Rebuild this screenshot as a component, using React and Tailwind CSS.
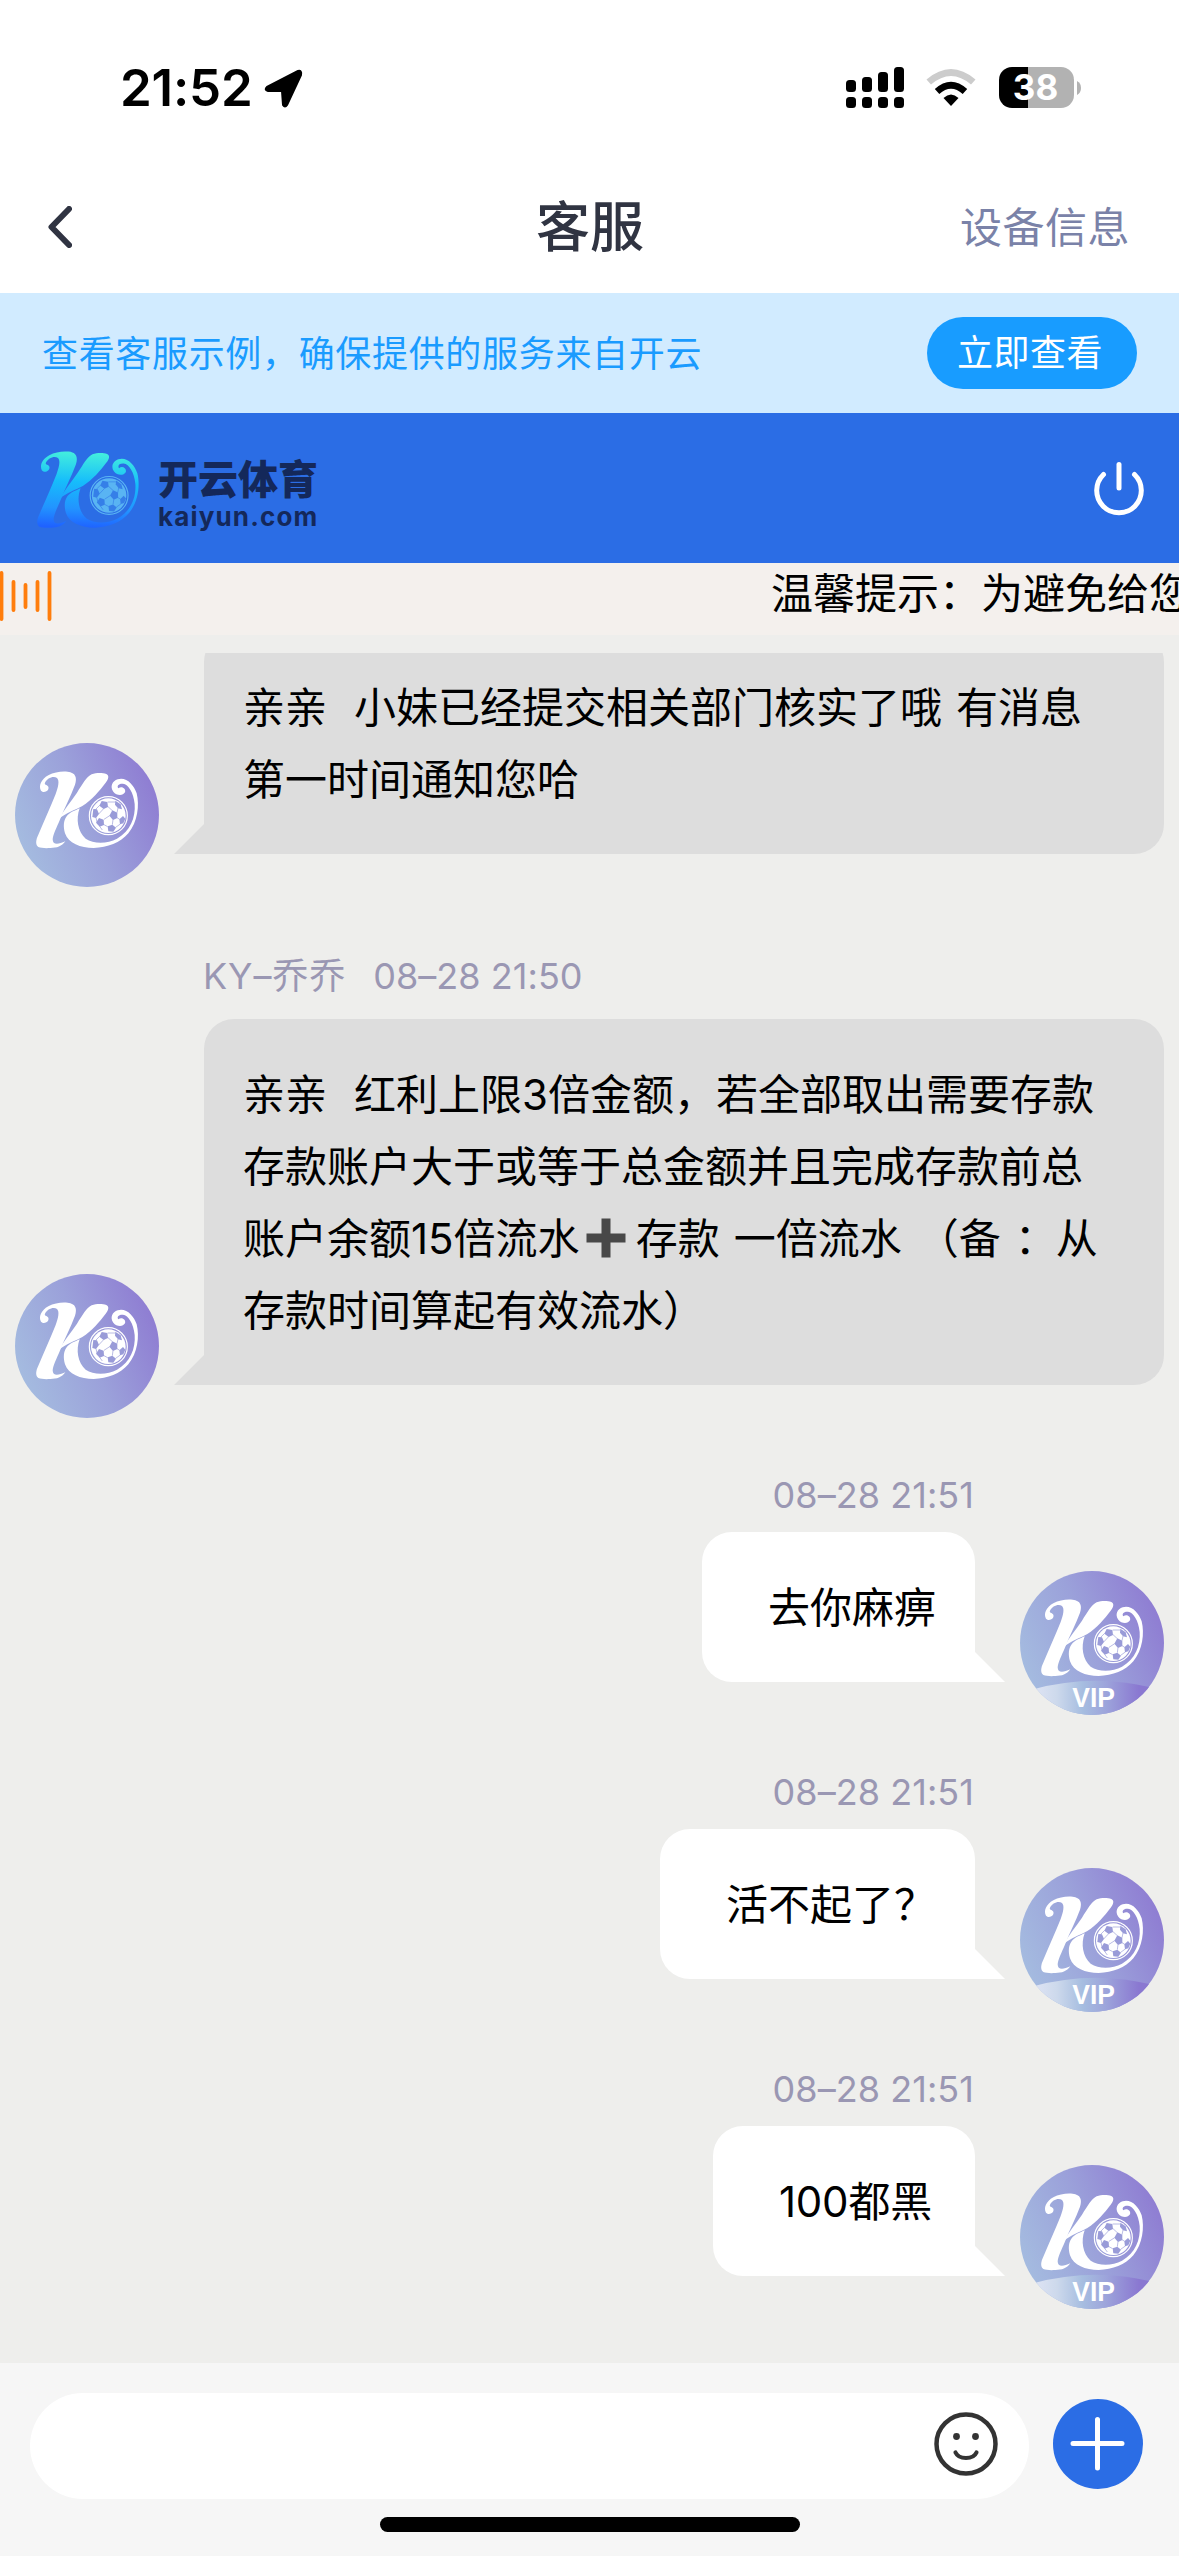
import React from "react";

const BALL_PATCHES = [
  "M320 237 L337 240 L339 255 L326 261 L313 251 Z",
  "M361 236 L377 247 L381 262 L369 259 L360 248 Z",
  "M295 261 L306 262 L312 276 L303 288 L292 285 Z",
  "M312 288 L326 293 L327 309 L314 314 L303 302 Z",
  "M352 265 L367 272 L367 288 L354 294 L343 281 Z",
  "M384 282 L391 290 L385 304 L375 307 L373 292 Z",
  "M338 313 L352 308 L363 317 L355 329 L340 328 Z",
];

function Mark({ fill, ballFill, patch }) {
  return (
    <g>
      <g fill={fill}>
        <path d="M138 206 C130 192 138 172 160 160 C178 150 200 147 218 149 C242 152 247 166 240 188 C228 222 208 258 196 290 C184 318 174 338 173 352 C173 370 190 368 211 358 C200 373 186 378 166 378 C150 379 138 378 130 375 C121 368 122 354 130 338 C148 296 166 256 182 216 C190 194 194 176 186 168 C176 160 156 168 150 182 C147 190 156 186 160 194 C164 206 147 215 138 206 Z" />
        <path d="M192 290 C208 262 228 238 246 212 C262 188 274 164 290 157 C304 152 322 152 334 156 C344 161 340 172 332 182 C314 206 290 234 262 252 C240 264 212 274 192 290 Z" />
        <path d="M254 259 C242 290 248 330 272 350 C296 366 336 366 366 350 C406 328 422 286 419 246 C416 212 400 187 384 185 C370 184 365 192 370 199 C380 190 394 200 390 211 C384 222 364 221 355 209 C344 194 352 177 368 172 C394 164 416 188 425 214 C434 250 428 300 400 334 C376 362 338 377 296 378 C256 378 220 364 210 334 C204 312 206 296 214 284 C224 270 240 266 254 259 Z" />
      </g>
      <circle cx="340" cy="281" r="57" fill="none" stroke={ballFill} strokeWidth="3.5" />
      <circle cx="340" cy="281" r="52" fill={ballFill} />
      <g fill={patch}>
        {BALL_PATCHES.map((d) => (
          <path key={d} d={d} />
        ))}
      </g>
      <path
        d="M339 254 L352 266 M338 240 L361 240 M326 260 L311 276 M327 292 L344 281 M327 308 L338 314 M354 293 L352 308 M366 287 L374 292 M366 272 L369 258 M303 287 L306 300 M314 250 L302 262 M314 313 L322 324 M362 316 L376 306"
        fill="none"
        stroke={patch}
        strokeWidth="2"
      />
    </g>
  );
}

function Avatar({ vip }) {
  return (
    <svg viewBox="60 63 432 432" className="-mb-[33px] size-36 shrink-0 self-end">
      <defs>
        <linearGradient id="av" x1="0" y1="0.72" x2="1" y2="0.3">
          <stop offset="0" stopColor="#a5bde0" />
          <stop offset="0.5" stopColor="#9ba1da" />
          <stop offset="1" stopColor="#8e7bd2" />
        </linearGradient>
        <linearGradient id="band" x1="0" y1="0" x2="1" y2="0">
          <stop offset="0" stopColor="#dfe4f4" />
          <stop offset="0.2" stopColor="#cdd9ec" />
          <stop offset="0.42" stopColor="#a6bde0" />
          <stop offset="0.62" stopColor="#9da4db" />
          <stop offset="0.9" stopColor="#8a78d1" />
        </linearGradient>
        <clipPath id="disc">
          <circle cx="276" cy="279" r="216" />
        </clipPath>
      </defs>
      <circle cx="276" cy="279" r="216" fill="url(#av)" />
      {vip && (
        <path d="M100 418 Q276 370 452 412 V500 H100 Z" fill="url(#band)" clipPath="url(#disc)" />
      )}
      <Mark fill="#fff" ballFill="#fff" patch="#999bd8" />
      {vip && (
        <text x="281" y="470" textAnchor="middle" fontSize="81" fontWeight="700" fill="#fff" textLength="128" lengthAdjust="spacingAndGlyphs" fontFamily="Liberation Sans, Arial, sans-serif">
          VIP
        </text>
      )}
    </svg>
  );
}

function StatusBar() {
  return (
    <div className="flex h-[172px] items-start justify-between pr-[98px] pl-[120px] text-black">
      <div className="flex pt-[58px]">
        <span className="w-[144px] text-[51px] leading-[60px] font-semibold tracking-[-0.2px]">21:52</span>
        <svg viewBox="0 0 39 40" className="mt-[11px] h-10 w-[39px]">
          <path d="M3 18 L34 2 Q38 1 37 6 L23 36 Q21 39 19 36 L18 22 L4 22 Q0 21 3 18Z" fill="#000" stroke="#000" strokeWidth="2" strokeLinejoin="round" />
        </svg>
      </div>
      <div className="flex pt-[67px]">
        <svg viewBox="0 0 58 41" className="h-[41px] w-[58px]">
          {[[0, 13], [16, 10], [32, 5], [48, 0]].map(([x, y]) => (
            <g key={x}>
              <rect x={x} y={y} width="10" height={25 - y} rx="3.5" />
              <rect x={x} y="30" width="10" height="11" rx="3.5" />
            </g>
          ))}
        </svg>
        <svg viewBox="0 0 50 38" className="mt-[2px] ml-[22px] h-[38px] w-[50px]">
          <path d="M0.5 10.5 Q25 -10.5 49.5 10.5 L45 15.5 Q25 -1.5 5 15.5 Z" fill="#ccc" />
          <path d="M8.8 20 Q25 5.5 41.2 20 L36.7 25 Q25 14.5 13.3 25 Z" />
          <path d="M17.5 29 Q25 22 32.5 29 L25 37 Z" />
        </svg>
        <div className="relative ml-[23px] flex h-[41px] w-[75px] items-center justify-center overflow-hidden rounded-[13px] bg-[linear-gradient(90deg,#000_29px,#b2b2b2_29px)] pr-[2px] text-[35px] font-bold text-white">
          38
        </div>
        <svg viewBox="0 0 4 14" className="mt-[14px] ml-[3px] h-[14px] w-1">
          <path d="M0 0 Q4 2 4 7 T0 14 Z" fill="#b2b2b2" />
        </svg>
      </div>
    </div>
  );
}

function LeftMessage({ children, clipped }) {
  return (
    <div className="flex pl-[15px]">
      <Avatar />
      <svg viewBox="0 0 30 30" className="ml-[15px] size-[30px] self-end">
        <path d="M0 30 L30 0 V30 Z" fill="#ddd" />
      </svg>
      <div className={(clipped ? "-mt-[21px] " : "") + "w-[960px] rounded-[30px] rounded-bl-none bg-[#ddd] px-[39px] pt-10 pb-[38px] text-[42px] leading-[72px] whitespace-pre text-black"}>
        {children}
      </div>
    </div>
  );
}

function RightMessage({ time, children }) {
  return (
    <div className="pt-[88px]">
      <div className="mr-[205px] mb-[15px] text-right text-[36px] leading-[44px] tracking-[0.05px] text-[#9a97b3]">{time}</div>
      <div className="flex justify-end pr-[15px]">
        <div className="rounded-[30px] rounded-br-none bg-white pt-10 pr-[39px] pb-[38px] pl-[66px] text-[42px] leading-[72px] whitespace-pre text-black">
          {children}
        </div>
        <svg viewBox="0 0 30 30" className="mr-[15px] size-[30px] self-end">
          <path d="M0 0 L30 30 H0 Z" fill="#fff" />
        </svg>
        <Avatar vip />
      </div>
    </div>
  );
}

export default function App() {
  return (
    <div lang="zh-CN" className="flex h-[2556px] w-[1179px] flex-col overflow-hidden bg-white font-['Inter','Noto_Sans_CJK_SC',sans-serif]">
      <StatusBar />

      <nav className="grid h-[121px] grid-cols-3 items-center pb-[12px]">
        <svg viewBox="0 0 24 42" className="ml-12 h-[42px] w-6">
          <path d="M21 3 L3.5 21 L21 39" fill="none" stroke="#303442" strokeWidth="6" strokeLinecap="round" strokeLinejoin="round" />
        </svg>
        <h1 className="pt-[2px] pl-px text-center text-[54px] leading-none font-medium text-[#303442]">客服</h1>
        <span className="pt-[2px] pr-[49px] text-right text-[42px] leading-none tracking-[0.5px] text-[#7a82a8]">设备信息</span>
      </nav>

      <div className="flex h-[120px] items-center justify-between bg-[#d1ebff] pr-[42px] pl-[42px]">
        <span className="pt-[2px] text-[36px] tracking-[0.67px] text-[#1a9bff]">查看客服示例，确保提供的服务来自开云</span>
        <button className="flex h-[72px] w-[210px] items-center justify-center rounded-full bg-[#189cff] pr-[4px] text-[36px] tracking-[0.5px] text-white">立即查看</button>
      </div>

      <header className="flex h-[150px] items-start justify-between bg-[#2b6de5] pl-[37px]">
        <div className="flex pt-[38px]">
          <svg viewBox="123 148 307 230" className="h-[77px] w-[102px]">
            <defs>
              <linearGradient id="brand" gradientUnits="userSpaceOnUse" x1="260" y1="148" x2="250" y2="378">
                <stop offset="0" stopColor="#45f0dc" />
                <stop offset="0.4" stopColor="#16bdfb" />
                <stop offset="0.75" stopColor="#2294ff" />
                <stop offset="1" stopColor="#1f62ff" />
              </linearGradient>
            </defs>
            <Mark fill="url(#brand)" ballFill="#59b4f3" patch="#357fe8" />
          </svg>
          <div className="ml-[19px] flex flex-col pt-[7px] text-[#14285a]">
            <span className="text-[40px] leading-[44px] font-black">开云体育</span>
            <span className="mt-px text-[26px] leading-[28px] font-bold tracking-[1.15px]">kaiyun.com</span>
          </div>
        </div>
        <svg viewBox="0 0 54 58" className="mt-[47px] mr-[33px] h-[58px] w-[54px]" fill="none" stroke="#fff" strokeWidth="5" strokeLinecap="round">
          <path d="M27 4.5 V28" />
          <path d="M11.5 14.5 A22.3 22.3 0 1 0 42.5 14.5" />
        </svg>
      </header>

      <div className="flex h-[72px] items-start overflow-hidden bg-[#f4f0ed]">
        <svg viewBox="0 0 52 50" className="mt-2 h-[50px] w-[52px] shrink-0" stroke="#ff7d0c" strokeWidth="3.8" strokeLinecap="round">
          <path d="M1.5 2 V48 M13.5 11 V39 M25.5 14 V36 M37.5 11 V39 M49.5 2 V48" />
        </svg>
        <span className="ml-[719px] pt-px text-[42px] leading-[60px] whitespace-nowrap text-black">温馨提示：为避免给您</span>
      </div>

      <main className="h-[1728px] bg-[#eeeeec] pt-[18px]">
        <section className="h-[1710px] overflow-hidden">
          <LeftMessage clipped>
            <p>亲亲<span className="inline-block w-[27px]"> </span>小妹已经提交相关部门核实了哦<span className="inline-block w-[14px]"> </span>有消息</p>
            <p>第一时间通知您哈</p>
          </LeftMessage>
          <div className="mt-[100px] mb-[21px] ml-[203px] text-[36px] leading-[44px] whitespace-pre text-[#9a97b3]">
            <span className="tracking-[0.9px]">KY–乔乔</span>
            <span className="inline-block w-[27px]"> </span>
            <span className="tracking-[0.05px]">08–28 21:50</span>
          </div>
          <LeftMessage>
            <p>亲亲<span className="inline-block w-[27px]"> </span>红利上限3倍金额，若全部取出需要存款</p>
            <p>存款账户大于或等于总金额并且完成存款前总</p>
            <p>
              账户余额15倍流水
              <svg viewBox="0 0 40 40" aria-label="➕" className="mr-[10px] ml-[6px] inline-block size-10 align-[-4px]">
                <path d="M15.5 0.5 H24.5 V15.5 H39.5 V24.5 H24.5 V39.5 H15.5 V24.5 H0.5 V15.5 H15.5 Z" fill="#484848" />
              </svg>
              存款<span className="inline-block w-[14px]"> </span>一倍流水<span className="inline-block w-[57px] text-right">（</span>备<span className="inline-block w-[55px] pl-[14px] text-center">：</span>从
            </p>
            <p>存款时间算起有效流水）</p>
          </LeftMessage>
          <RightMessage time="08–28 21:51">去你麻痹</RightMessage>
          <RightMessage time="08–28 21:51">活不起了？</RightMessage>
          <RightMessage time="08–28 21:51">
            <span className="pr-1 tracking-[-0.2px]">100都黑</span>
          </RightMessage>
        </section>
      </main>

      <footer className="flex h-[193px] flex-col items-center bg-[#f6f6f6] pt-[30px]">
        <div className="flex h-[106px] w-full items-start pl-[30px]">
          <div className="flex h-[106px] w-[999px] justify-end rounded-full bg-white pt-[19px] pr-[31px]">
            <svg viewBox="0 0 64 64" className="size-16">
              <circle cx="32" cy="32" r="29.5" fill="none" stroke="#333" strokeWidth="4.5" />
              <circle cx="22.5" cy="24.5" r="3.4" fill="#333" />
              <circle cx="41.5" cy="24.5" r="3.4" fill="#333" />
              <path d="M21.5 40.5 Q24 46 32 46 T42.5 40.5" fill="none" stroke="#333" strokeWidth="4.2" strokeLinecap="round" />
            </svg>
          </div>
          <svg viewBox="0 0 90 90" className="mt-[6px] ml-6 size-[90px]">
            <circle cx="45" cy="45" r="45" fill="#2b6de5" />
            <path d="M44.5 20.5 V69 M20 44.5 H69" stroke="#fff" strokeWidth="5" strokeLinecap="round" />
          </svg>
        </div>
        <div className="mt-[18px] h-[15px] w-[420px] rounded-full bg-black" />
      </footer>
    </div>
  );
}
